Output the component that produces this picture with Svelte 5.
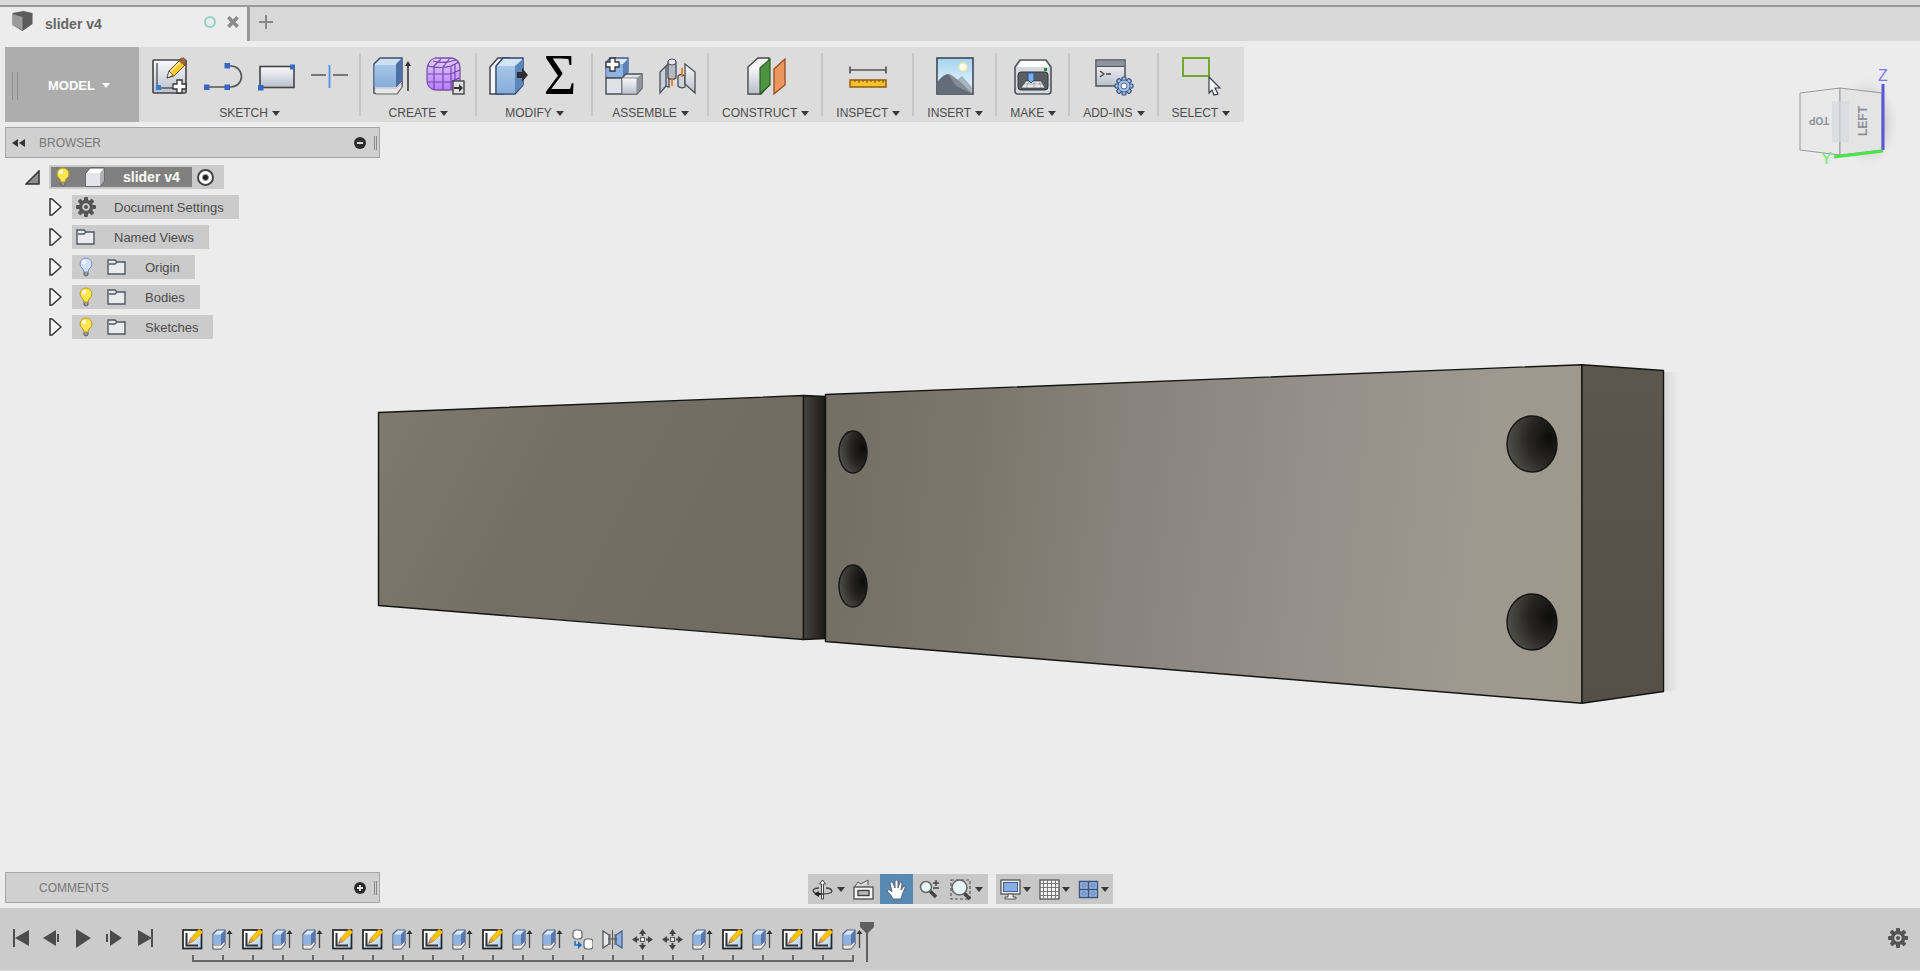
<script lang="ts">
    interface ToolGroup {
        label: string
        icons: string[]
    }

    interface TreeNode {
        label: string
        icons: string[]
    }

    interface NavItem {
        icon: string
        label: string
        menu?: boolean
    }

    const groups: ToolGroup[] = [
        { label: 'SKETCH', icons: ['sketch', 'line', 'rectangle', 'trim'] },
        { label: 'CREATE', icons: ['extrude', 'form'] },
        { label: 'MODIFY', icons: ['presspull', 'sigma'] },
        { label: 'ASSEMBLE', icons: ['component', 'joint'] },
        { label: 'CONSTRUCT', icons: ['plane'] },
        { label: 'INSPECT', icons: ['measure'] },
        { label: 'INSERT', icons: ['picture'] },
        { label: 'MAKE', icons: ['printer'] },
        { label: 'ADD-INS', icons: ['script'] },
        { label: 'SELECT', icons: ['select'] }
    ]

    const nodes: TreeNode[] = [
        { label: 'Document Settings', icons: ['gear'] },
        { label: 'Named Views', icons: ['folder'] },
        { label: 'Origin', icons: ['bulb-off', 'folder'] },
        { label: 'Bodies', icons: ['bulb', 'folder'] },
        { label: 'Sketches', icons: ['bulb', 'folder'] }
    ]

    const cameraTools: NavItem[] = [
        { icon: 'orbit', label: 'Orbit', menu: true },
        { icon: 'lookat', label: 'Look At' },
        { icon: 'pan', label: 'Pan' },
        { icon: 'zoom', label: 'Zoom' },
        { icon: 'fit', label: 'Fit', menu: true }
    ]

    const displayTools: NavItem[] = [
        { icon: 'display', label: 'Display Settings', menu: true },
        { icon: 'grid', label: 'Grid and Snaps', menu: true },
        { icon: 'viewports', label: 'Viewports', menu: true }
    ]

    const playback = [
        { label: 'Go to start', d: 'M2 1h2v18h-2zM18 2v16L4 10z' },
        { label: 'Step back', d: 'M14 2v16L1 10zM15 6h2v8h-2z' },
        { label: 'Play', d: 'M3 1L18 10L3 20z' },
        { label: 'Step forward', d: 'M2 6h2v8h-2zM6 2v16L18 10z' },
        { label: 'Go to end', d: 'M3 2v16L17 10zM16 1h2v18h-2z' }
    ]

    // s sketch, e extrude, c copy, m mirror, v move
    const history = [...'seseesseseseecmvvesesse']
    const featureNames: Record<string, string> = {
        s: 'Sketch',
        e: 'Extrude',
        c: 'Copy',
        m: 'Mirror',
        v: 'Move'
    }

    const teeth = [0, 45, 90, 135, 180, 225, 270, 315]
    const holes = [
        { cx: 853, cy: 452, rx: 14, ry: 21 },
        { cx: 853, cy: 586, rx: 14, ry: 21 },
        { cx: 1532, cy: 444, rx: 25, ry: 28 },
        { cx: 1532, cy: 622, rx: 25, ry: 28 }
    ]

    let activeTool = $state('pan')
</script>

{#snippet toolIcon(name: string)}
    <svg class="tool-icon" viewBox="0 0 38 38" aria-hidden="true">
        {#if name === 'sketch'}
            <rect x="2" y="3" width="33" height="33" rx="1" fill="url(#steel)" stroke="#444" stroke-width="1.6" />
            <path d="M6 6v25h20" fill="none" stroke="#555" stroke-width="1.4" />
            <rect x="5" y="28" width="5" height="5" fill="#2f7fd6" />
            <path d="M16 21l2-7L30 2l5 5-12 12z" fill="#ffc927" stroke="#6b4d14" stroke-width="1" />
            <path d="M19 15L30 4" stroke="#fff2a8" stroke-width="1.6" />
            <path d="M28 4l2-3h3l2 3v2l-2 2z" fill="#a5673f" stroke="#5d4632" stroke-width=".6" />
            <path d="M16 21l2-7 4 4z" fill="#fff" stroke="#444" stroke-width=".8" />
            <path d="M26 23h5v4h4v5h-4v4h-5v-4h-4v-5h4z" fill="#fff" stroke="#333" stroke-width="1.3" />
        {:else if name === 'line'}
            <path d="M3 30H27A10.500 10.500 0 0 0 27 9H23" fill="none" stroke="#555" stroke-width="1.6" />
            <path d="M0 27.500h5.500v5.500H0zM20.500 27.500H26V33h-5.500zM20.500 6H26v5.500h-5.500z" fill="#3767c6" />
        {:else if name === 'rectangle'}
            <rect x="3" y="9.500" width="34" height="21" fill="url(#steel)" stroke="#444" stroke-width="1.6" />
            <path d="M33 7.500h5v5h-5zM1 28h5.500v5.500H1z" fill="#3767c6" />
        {:else if name === 'trim'}
            <path d="M1 18h15M23 18h15" stroke="#555" stroke-width="1.6" />
            <path d="M19.500 8v23" stroke="#4d90f0" stroke-width="1.8" />
        {:else if name === 'extrude'}
            <path d="M1 7L7 1H29V29L23 36H1z" fill="#cddff0" stroke="#3b4f78" stroke-width="1.5" />
            <path d="M23 7L29 1V25L23 31z" fill="#4c70a6" />
            <path d="M1.500 8H23V30H1.500z" fill="url(#blue)" />
            <path d="M1.500 31H23L29 25V30L24 37H3L1 35z" fill="#e6e7ec" stroke="#666" stroke-width="1.2" />
            <path d="M2 31h21l6-6" stroke="#fff" fill="none" />
            <path d="M35 34V8" stroke="#444" stroke-width="1.7" />
            <path d="M32 9L35 4L38 9z" fill="#333" />
        {:else if name === 'form'}
            <path d="M9 1H26Q34 3 34 11V24Q31 33 24 33H10Q1 32 1 23V12Q2 3 9 1z" fill="url(#purple)" stroke="#7a52a8" stroke-width="1.300" />
            <path d="M2 9Q14 12 25 9L33 5M7 4Q18 7 30 3M2 17H25L34 13M2 25H25L33 21M8 9V32M17 10V33M25 9V32M8 9L15 2M17 10L24 1M29 7V29" fill="none" stroke="#7545b0" stroke-width="1.200" />
            <rect x="27" y="24" width="11" height="13" fill="#e2e2e2" stroke="#444" stroke-width="1.4" />
            <path d="M28 30h5v-3l4 4-4 4v-3h-5z" fill="#333" />
        {:else if name === 'presspull'}
            <path d="M1 10L9 1H20L14 9V37H1z" fill="#f5f5f7" stroke="#444" stroke-width="1.5" />
            <path d="M7 9L14 1H34V28L26 37H7z" fill="#d3e4f4" stroke="#2e4672" stroke-width="1.5" />
            <path d="M26 9L34 2V28L26 36z" fill="#5d86bd" />
            <path d="M8 9H26V36H8z" fill="url(#blue)" />
            <path d="M28 15h5v-4l6 7-6 7v-4h-5z" fill="#2e2e30" />
        {:else if name === 'sigma'}
            <text x="18" y="37" text-anchor="middle" class="sigma">Σ</text>
        {:else if name === 'component'}
            <path d="M1 6L5 1H23V15L18 20H1z" fill="#d7e5f7" stroke="#41598c" stroke-width="1.3" />
            <path d="M1.500 7H18V20H1.500z" fill="#8fb1df" />
            <path d="M18 7L23 2V15L18 20z" fill="#5b7fb8" />
            <path d="M1 21H17V37H1zM17 21L21 17H37V31L32 37H17z" fill="#dfe2e9" stroke="#4a4d55" stroke-width="1.4" />
            <path d="M17 21H32V37H17z" fill="url(#steel)" stroke="#777" stroke-width=".8" />
            <path d="M32 21L37 17V31L32 37z" fill="#8e939e" />
            <path d="M5 1h5v4h4v5h-4v4H5v-4H1V5h4z" fill="#fff" stroke="#333" stroke-width="1.300" />
        {:else if name === 'joint'}
            <path d="M2 15L8 9V29L2 36zM8 9L11 6V30L8 29z" fill="#c9cfd9" stroke="#4b4e55" stroke-width="1.300" />
            <path d="M10 5Q13 1 18 5V21Q14 24 10 21z" fill="#b4bac5" stroke="#4b4e55" stroke-width="1.300" />
            <ellipse cx="14" cy="5" rx="4" ry="3" fill="#e6e8ec" stroke="#4b4e55" />
            <path d="M20 19Q23 16 27 19V30Q23 32 20 29z" fill="#cdd2db" stroke="#4b4e55" stroke-width="1.300" />
            <path d="M27 7L37 15V36L27 27z" fill="url(#steel)" stroke="#4b4e55" stroke-width="1.300" />
            <path d="M14 21v8M24 11v9" stroke="#f27a1a" stroke-width="1.8" />
        {:else if name === 'plane'}
            <path d="M1 10L11 1H22V28L14 37H1z" fill="#f4f4f5" stroke="#444" stroke-width="1.4" />
            <path d="M2 10H13V36H2z" fill="url(#steel)" />
            <path d="M13 11L23 2V28L13 37z" fill="#4d9440" stroke="#2c5e22" stroke-width="1.200" />
            <path d="M27 12L38 2V28L27 37z" fill="#ea965f" stroke="#9c4d1f" stroke-width="1.300" />
        {:else if name === 'measure'}
            <path d="M1 13H37M1 9.500V16.500M37 9.500V16.500" stroke="#555" stroke-width="1.7" />
            <rect x="1" y="23" width="36" height="7" fill="#f2c12e" stroke="#9a6210" stroke-width="1.6" />
            <path d="M6 23v2M10 23v3M14 23v2M18 23v3M22 23v2M26 23v3M30 23v2M34 23v3" stroke="#805312" />
        {:else if name === 'picture'}
            <rect x="1" y="1" width="36" height="36" fill="url(#sky)" stroke="#3e4a58" stroke-width="1.6" />
            <circle cx="27" cy="10" r="4" fill="#fff" stroke="#f4e6a0" stroke-width="1.4" />
            <path d="M17 26L26 19L36 30V36H17z" fill="#a7b5c2" />
            <path d="M2 24Q8 17 12 17Q18 18 35 36H2z" fill="#646c7a" />
            <path d="M12 17Q18 18 35 36L20 29z" fill="#858c98" />
        {:else if name === 'printer'}
            <path d="M1 10L6 3H32L37 10V34Q37 37 34 37H4Q1 37 1 34z" fill="#d7d9de" stroke="#51545b" stroke-width="1.6" />
            <path d="M3 10L7 4H31L35 10z" fill="#fff" />
            <rect x="4" y="15" width="30" height="18" rx="3" fill="#5a5d63" stroke="#38393d" />
            <path d="M12 24H27L31 31H7z" fill="#e9eaec" stroke="#333" stroke-width=".6" />
            <path d="M15 24L12 31M20 24V31M25 24L27 31M9 27H29" stroke="#888" stroke-width=".6" />
            <path d="M14 16H20V23L17 26L14 23z" fill="#78aeea" stroke="#24528e" />
            <rect x="30" y="11" width="3" height="3" fill="#12912d" />
        {:else if name === 'script'}
            <rect x="1" y="3" width="29" height="26" fill="url(#steel)" stroke="#4d5058" stroke-width="1.5" />
            <path d="M2 4H29V9H2z" fill="#8d949f" />
            <path d="M2 9.500H29" stroke="#4d5058" />
            <path d="M5 14l4 3-4 3M11 17h5" fill="none" stroke="#444" stroke-width="1.300" />
            {#each teeth as angle}
                <rect x="27" y="20" width="4" height="5" rx="1" fill="#a9c3e8" stroke="#304d7c" stroke-width="1.2" transform="rotate({angle} 29 29)" />
            {/each}
            <circle cx="29" cy="29" r="6" fill="#a9c3e8" stroke="#304d7c" stroke-width=".8" />
            <circle cx="29" cy="29" r="3" fill="#fff" stroke="#46659a" />
        {:else if name === 'select'}
            <rect x="1" y="1" width="26" height="18" fill="none" stroke="#70a832" stroke-width="2" />
            <path d="M27 20L38 31L33 31L36 37L32 38L30 33L27 36z" fill="#f4f5f8" stroke="#3c3e44" stroke-width="1.200" />
        {/if}
    </svg>
{/snippet}

{#snippet treeIcon(name: string)}
    <svg class="tree-icon" viewBox="0 0 20 20" aria-hidden="true">
        {#if name === 'gear'}
            {#each teeth as angle}
                <rect x="8" y="0" width="4" height="6" rx="1" fill="#555" transform="rotate({angle} 10 10)" />
            {/each}
            <circle cx="10" cy="10" r="5.500" fill="none" stroke="#555" stroke-width="3.400" />
            <circle cx="10" cy="10" r="2" fill="#555" />
        {:else if name === 'folder'}
            <path d="M1 3h7l2 2h8v12H1z" fill="#e9ebef" stroke="#525863" stroke-width="1.4" />
            <path d="M2 7h6l2-2" fill="none" stroke="#525863" stroke-width="1.3" />
        {:else if name === 'cube'}
            <path d="M1 6l4-5h14v13l-4 5H1z" fill="#fff" stroke="#555" stroke-width="1" />
            <path d="M1 6h14v13H1z" fill="#e3e5ea" />
            <path d="M15 6l4-5v13l-4 5z" fill="#aeb2ba" />
        {:else}
            <path d="M8 14h4v4q-2 2-4 0z" fill="#9a9a9a" stroke="#5f6470" stroke-width="1" />
            <path d="M10 1a6 6 0 0 0-6 6q0 3 3 5l1 3h4l1-3q3-2 3-5a6 6 0 0 0-6-6z" fill={name === 'bulb' ? '#ffe550' : '#d4e0fa'} stroke={name === 'bulb' ? '#c29a1c' : '#7c93c7'} />
            <circle cx="8" cy="5" r="2.200" fill="#fff" opacity=".75" />
        {/if}
    </svg>
{/snippet}

{#snippet navIcon(name: string)}
    <svg class="nav-icon" viewBox="0 0 21 21" aria-hidden="true">
        {#if name === 'orbit'}
            <path d="M9.500 20V5H7.500L10.500 1L13.500 5H11.500V20z" fill="#fff" stroke="#444" />
            <path d="M7 9Q1 9 1 12Q2 15 10 15Q20 15 20 12Q19 9 14 9" fill="none" stroke="#444" stroke-width="1.300" />
            <path d="M2 15l5-3v6z" fill="#222" />
            <path d="M6 15h3" stroke="#222" stroke-width="2" />
        {:else if name === 'lookat'}
            <path d="M2 7L5 3L8 5L15 1V6" fill="#ddd" stroke="#555" />
            <rect x="1" y="8" width="19" height="12" fill="#f4f4f4" stroke="#555" stroke-width="1.4" />
            <rect x="5" y="11.500" width="11" height="5" fill="#bbb" stroke="#444" stroke-width="1.4" />
        {:else if name === 'pan'}
            <path d="M7 20Q5 15 1 12Q1 10 4 11L6 13L4 4Q5 2 7 4L9 9V2Q10 0 12 2V9L14 3Q16 2 16 5L15 11L18 7Q20 7 19 9Q16 15 15 20z" fill="#fff" stroke="#53606e" stroke-width=".9" />
        {:else if name === 'zoom'}
            <path d="M11 12l6 6" stroke="#444" stroke-width="3.400" />
            <circle cx="7" cy="8" r="5.500" fill="#e8f3f4" stroke="#666" stroke-width="1.500" />
            <path d="M14 4h6M17 1v6M14 9h6" stroke="#444" stroke-width="1.400" />
        {:else if name === 'fit'}
            <path d="M1 1h19v19H1z" fill="none" stroke="#555" stroke-width="1.200" stroke-dasharray="3 2" />
            <path d="M14 14l6 6" stroke="#444" stroke-width="3.600" />
            <circle cx="9.500" cy="8.500" r="7.500" fill="#e8f3f4" stroke="#666" stroke-width="1.500" />
        {:else if name === 'display'}
            <rect x="1" y="1" width="19" height="14" fill="#f0f0f0" stroke="#555" stroke-width="1.300" />
            <rect x="3.500" y="3.500" width="14" height="9" fill="#87aee0" stroke="#3c5f98" />
            <path d="M8 15h5v3h3v2H5v-2h3z" fill="#eee" stroke="#555" />
        {:else if name === 'grid'}
            <rect x="1" y="1" width="19" height="19" fill="#f5f5f5" stroke="#555" stroke-width="1.300" />
            <path d="M1 4.500h19M1 8.500h19M1 12.500h19M1 16.500h19M4.500 1v19M8.500 1v19M12.500 1v19M16.500 1v19" stroke="#777" />
        {:else if name === 'viewports'}
            <path d="M1.500 2.500h18v16h-18z" fill="#9dbbe3" stroke="#3e5580" stroke-width="1.400" />
            <path d="M10.500 2v17M1 10.500h19" stroke="#3e5580" stroke-width="1.600" />
            <path d="M4 5h4v3H4zM13 5h4v3h-4zM4 13h4v3H4zM13 13h4v3h-4z" fill="#8aabda" stroke="#6686ba" />
        {/if}
    </svg>
{/snippet}

{#snippet featureIcon(kind: string)}
    <svg class="feature-icon" viewBox="0 0 21 21" aria-hidden="true">
        {#if kind === 's'}
            <rect x="1" y="1" width="18.500" height="18.500" fill="url(#page)" stroke="#222" stroke-width="1.700" />
            <path d="M4.500 4v12.500H16" fill="none" stroke="#333" stroke-width="2" />
            <path d="M6 15l2-5 3 3z" fill="#7a6a4a" />
            <path d="M8 10L17 0L21 3L11 13z" fill="#ffc400" stroke="#c98212" stroke-width=".5" />
            <path d="M7 12L9 9L12 12L9 14z" fill="#e49a55" />
        {:else if kind === 'e'}
            <path d="M1 5L5 1H13V15L9 20H1z" fill="#dce8f6" stroke="#4c5f88" stroke-width="1.200" />
            <path d="M1.500 5.500H9V15H1.500z" fill="#8fb2df" />
            <path d="M9 5L13 1V13L9 16z" fill="#5478b2" />
            <path d="M1 16H9L13 12V15L9 20H2L1 19z" fill="#ecedf0" stroke="#777" />
            <path d="M17.500 19V4" stroke="#444" stroke-width="1.300" />
            <path d="M14.500 5l3-4 3 4z" fill="#333" />
        {:else if kind === 'c'}
            <rect x="1" y="1" width="9" height="9" rx="3" fill="#fff" stroke="#666" stroke-width="1.200" />
            <rect x="12" y="10" width="9" height="10" rx="3" fill="#fff" stroke="#666" stroke-width="1.200" />
            <path d="M3 12v4h5" fill="none" stroke="#1d6fc9" stroke-width="1.600" />
            <path d="M6 12l4 4-4 4z" fill="#1d6fc9" />
        {:else if kind === 'm'}
            <path d="M1 2L7 6V15L1 19z" fill="#e8e9ec" stroke="#555" stroke-width="1.300" />
            <path d="M20 2L14 6V15L20 19z" fill="#8db2e2" stroke="#43618f" stroke-width="1.300" />
            <path d="M10.500 1v19M8 5v11M13 5v11M6 10h9" stroke="#555" />
        {:else}
            <path d="M10.500 0L14 5H11.500V7H9.500V5H7zM10.500 21L14 16H11.500V14H9.500V16H7zM0 10.500L5 7V9.500H7V11.500H5V14zM21 10.500L16 7V9.500H14V11.500H16V14z" fill="#444" />
            <rect x="8.500" y="8.500" width="4" height="4" fill="#eee" stroke="#555" />
        {/if}
    </svg>
{/snippet}

{#snippet navGroup(items: NavItem[], wide: boolean)}
    <div class="nav-group" class:wide>
        {#each items as item}
            <button
                class="nav-btn"
                class:menu={item.menu}
                class:active={activeTool === item.icon}
                aria-label={item.label}
                onclick={() => !item.menu && (activeTool = item.icon)}>
                {@render navIcon(item.icon)}
                {#if item.menu}<span class="caret"></span>{/if}
            </button>
        {/each}
    </div>
{/snippet}

<!-- shared gradients -->
<svg class="defs" width="0" height="0" aria-hidden="true">
    <defs>
        <linearGradient id="steel" x1="0" y1="0" x2="0" y2="1">
            <stop offset="0" stop-color="#fafafc" />
            <stop offset="1" stop-color="#b9bfcc" />
        </linearGradient>
        <linearGradient id="blue" x1="0" y1="0" x2="0" y2="1">
            <stop offset="0" stop-color="#a7c6e9" />
            <stop offset="1" stop-color="#86add9" />
        </linearGradient>
        <linearGradient id="purple" x1="0" y1="0" x2="0" y2="1">
            <stop offset="0" stop-color="#e2cef6" />
            <stop offset="1" stop-color="#b87bff" />
        </linearGradient>
        <linearGradient id="sky" x1="0" y1="0" x2="0" y2="1">
            <stop offset="0" stop-color="#a5d3f0" />
            <stop offset="1" stop-color="#f2f9fd" />
        </linearGradient>
        <linearGradient id="page" x1="0" y1="0" x2="1" y2="1">
            <stop offset=".3" stop-color="#fff" />
            <stop offset="1" stop-color="#9cc4e6" />
        </linearGradient>
    </defs>
</svg>

<div class="app">
    <header class="tabs">
        <div class="tab">
            <svg class="tab-cube" viewBox="0 0 20 20" aria-hidden="true">
                <path d="M0 2L11 0L20 2V13L10 20L0 14z" fill="#5c5c5c" />
                <path d="M0 3L10 6V19L0 14z" fill="#9b9b9b" />
            </svg>
            <span class="tab-title">slider v4</span>
            <span class="status"></span>
            <button class="close" aria-label="Close tab">
                <svg viewBox="0 0 12 12"><path d="M2 2l8 8M10 2l-8 8" stroke="#8a8a8a" stroke-width="3" /></svg>
            </button>
        </div>
        <button class="new-tab" aria-label="New tab">
            <svg viewBox="0 0 14 14"><path d="M7 0v14M0 7h14" stroke="#85858b" stroke-width="2" /></svg>
        </button>
    </header>

    <main class="workspace">
        <svg class="model" viewBox="0 41 1920 867" aria-label="slider v4 model">
            <defs>
                <linearGradient id="face-left" x1="0" y1="0" x2="1" y2=".3">
                    <stop offset="0" stop-color="#7e7a6d" />
                    <stop offset=".5" stop-color="#736f64" />
                    <stop offset="1" stop-color="#706c61" />
                </linearGradient>
                <linearGradient id="face-right" gradientUnits="userSpaceOnUse" x1="826" y1="480" x2="1582" y2="560">
                    <stop offset="0" stop-color="#736f64" />
                    <stop offset=".2" stop-color="#7b776c" />
                    <stop offset=".4" stop-color="#88847d" />
                    <stop offset=".65" stop-color="#95918a" />
                    <stop offset=".9" stop-color="#9e9a90" />
                    <stop offset="1" stop-color="#9e988a" />
                </linearGradient>
                <linearGradient id="groove" x1="0" y1="0" x2="1" y2="0">
                    <stop offset="0" stop-color="#45443f" />
                    <stop offset="1" stop-color="#1b1a18" />
                </linearGradient>
                <linearGradient id="end" x1="0" y1="0" x2="0" y2="1">
                    <stop offset="0" stop-color="#5b574e" />
                    <stop offset="1" stop-color="#545047" />
                </linearGradient>
                <linearGradient id="cast" x1="0" y1="0" x2="1" y2="0">
                    <stop offset="0" stop-color="#d6d6d6" />
                    <stop offset="1" stop-color="#ececec" />
                </linearGradient>
                <radialGradient id="bore" cx=".85" cy=".4" r=".9">
                    <stop offset="0" stop-color="#0c0c0b" />
                    <stop offset=".5" stop-color="#282724" />
                    <stop offset="1" stop-color="#55554f" />
                </radialGradient>
            </defs>
            <path d="M1664 372H1678V691H1664z" fill="url(#cast)" />
            <g stroke="#141412" stroke-width="1.400" stroke-linejoin="round">
                <path d="M378.500 412.500L803.500 395.500V639.500L378.500 605.500z" fill="url(#face-left)" />
                <path d="M803.500 395.500L825.500 396.500V638.500L803.500 639.500z" fill="url(#groove)" />
                <path d="M825.500 394.500L1582 364.700V703.300L825.500 641.500z" fill="url(#face-right)" />
                <path d="M1582 364.700L1663.500 370.500V691.500L1582 703.300z" fill="url(#end)" />
                {#each holes as hole}
                    <ellipse {...hole} fill="url(#bore)" />
                {/each}
            </g>
        </svg>

        <svg class="view-cube" viewBox="0 0 110 110" aria-label="View cube">
            <defs>
                <radialGradient id="cube-shadow">
                    <stop offset=".4" stop-color="#bdbdbd" />
                    <stop offset="1" stop-color="#ececec" stop-opacity="0" />
                </radialGradient>
            </defs>
            <ellipse cx="78" cy="55" rx="32" ry="48" fill="url(#cube-shadow)" />
            <path d="M10 26L50 21V88L10 83z" fill="#e9e9e9" stroke="#999" />
            <path d="M50 21L92 26V83L50 88z" fill="#e4e4e4" stroke="#999" />
            <path d="M42 34H59V75H42z" fill="#d5d8e0" opacity=".7" />
            <text class="cube-face top" transform="translate(29 54) rotate(180)" y="4" text-anchor="middle">TOP</text>
            <text class="cube-face" transform="translate(73 54) rotate(-90)" y="4" text-anchor="middle">LEFT</text>
            <path d="M93 17V83" stroke="#5c56d8" stroke-width="3" />
            <path d="M93 84L44 90" stroke="#45e645" stroke-width="3" />
            <text class="axis z" x="88" y="14">Z</text>
            <text class="axis y" x="31" y="97">Y</text>
        </svg>

        <div class="toolbar" role="toolbar" aria-label="Model tools">
            <button class="mode">
                <span class="grip"></span>
                MODEL
                <span class="caret"></span>
            </button>
            {#each groups as group}
                <div class="tool-group">
                    <div class="tool-icons">
                        {#each group.icons as icon}
                            <button class="tool" aria-label={icon}>{@render toolIcon(icon)}</button>
                        {/each}
                    </div>
                    <button class="tool-label">{group.label}<span class="caret"></span></button>
                </div>
            {/each}
        </div>

        <div class="panel-head browser">
            <svg class="collapse" viewBox="0 0 13 8" aria-hidden="true"><path d="M6 0v8L0 4zM13 0v8L7 4z" fill="#333" /></svg>
            <span class="panel-title">BROWSER</span>
            <button class="round" aria-label="Collapse browser">
                <svg viewBox="0 0 12 12"><circle cx="6" cy="6" r="6" fill="#2c2c2c" /><path d="M3 6h6" stroke="#ddd" stroke-width="2" /></svg>
            </button>
            <span class="edge"></span>
        </div>

        <ul class="tree">
            <li class="root">
                <svg class="opened" viewBox="0 0 15 15" aria-hidden="true"><path d="M1 14L14 1V14z" fill="#8f8f8f" stroke="#333" stroke-width="1.500" /></svg>
                <div class="root-pill">
                    <span class="root-name">
                        {@render treeIcon('bulb')}
                        {@render treeIcon('cube')}
                        slider v4
                    </span>
                    <input type="radio" checked aria-label="Activate slider v4" />
                </div>
            </li>
            {#each nodes as node}
                <li>
                    <svg class="closed" viewBox="0 0 13 18" aria-hidden="true"><path d="M1 1H3L12 9L3 17H1z" fill="#f5f5f5" stroke="#333" stroke-width="1.500" /></svg>
                    <div class="pill">
                        {#each node.icons as icon}{@render treeIcon(icon)}{/each}
                        <span>{node.label}</span>
                    </div>
                </li>
            {/each}
        </ul>

        <div class="bottom">
            <div class="panel-head comments">
                <span class="panel-title">COMMENTS</span>
                <button class="round" aria-label="Expand comments">
                    <svg viewBox="0 0 12 12"><circle cx="6" cy="6" r="6" fill="#2c2c2c" /><path d="M3 6h6M6 3v6" stroke="#ddd" stroke-width="2" /></svg>
                </button>
                <span class="edge"></span>
            </div>
            <nav class="navbar" aria-label="Navigation">
                {@render navGroup(cameraTools, true)}
                {@render navGroup(displayTools, false)}
            </nav>
        </div>
    </main>

    <footer class="timeline">
        <div class="playback">
            {#each playback as step}
                <button aria-label={step.label}>
                    <svg viewBox="0 0 20 20"><path d={step.d} fill="#4c4c4c" /></svg>
                </button>
            {/each}
        </div>
        <ol class="features">
            {#each history as kind}
                <li><button aria-label={featureNames[kind]}>{@render featureIcon(kind)}</button></li>
            {/each}
        </ol>
        <svg class="marker" viewBox="0 0 16 40" aria-hidden="true">
            <path d="M1 0H15V5L9 11V40H7V11L1 5z" fill="#606060" />
        </svg>
        <button class="settings" aria-label="Timeline settings">{@render treeIcon('gear')}</button>
    </footer>
</div>

<style>
    :global(body) {
        margin: 0;
    }

    .app {
        display: flex;
        flex-direction: column;
        min-height: 100vh;
        background: #ececec;
        color: #4c4c4c;
        font-family: 'Liberation Sans', Arial, sans-serif;
        font-size: 12px;
    }

    .defs {
        position: absolute;
    }

    button {
        display: flex;
        align-items: center;
        padding: 0;
        border: 0;
        background: none;
        color: inherit;
        font: inherit;
    }

    svg {
        display: block;
    }

    .caret {
        width: 0;
        border: 4px solid transparent;
        border-top: 5px solid #383838;
        border-bottom: 0;
    }

    /* document tabs */
    .tabs {
        display: flex;
        height: 36px;
        padding-top: 5px;
        background: linear-gradient(#d8d8d8 5px, #999 5px, #999 7px, #d8d8d8 7px);
    }

    .tab {
        display: flex;
        align-items: center;
        box-sizing: border-box;
        width: 250px;
        margin-top: 2px;
        padding: 0 7px 0 12px;
        border-right: 3px solid #999;
        background: #ececec;
    }

    .tab-cube {
        width: 21px;
        height: 20px;
        margin-bottom: 6px;
    }

    .tab-title {
        flex: 1;
        padding-left: 12px;
        color: #666;
        font-size: 14px;
        font-weight: bold;
    }

    .status {
        width: 8px;
        height: 8px;
        margin: 0 10px 4px;
        border: 2px solid #8ed2c0;
        border-radius: 50%;
    }

    .close {
        margin-bottom: 4px;
    }

    .close svg,
    .new-tab svg {
        width: 14px;
        height: 14px;
    }

    .new-tab {
        padding: 0 9px 2px;
    }

    /* canvas */
    .workspace {
        position: relative;
        display: flex;
        flex: 1;
        flex-direction: column;
        align-items: flex-start;
        padding: 6px 5px 4px;
    }

    .model {
        position: absolute;
        inset: 0;
        width: 100%;
        height: 100%;
    }

    .view-cube {
        position: absolute;
        top: 26px;
        right: 20px;
        width: 110px;
        height: 110px;
    }

    .cube-face {
        fill: #8d9196;
        font-size: 12px;
        font-weight: bold;

        &.top {
            font-size: 10px;
        }
    }

    .axis {
        font-size: 16px;

        &.z {
            fill: #7d78f0;
        }

        &.y {
            fill: #6fe86f;
        }
    }

    /* toolbar */
    .toolbar {
        position: relative;
        display: flex;
        height: 75px;
        background: #dcdcdc;
    }

    .mode {
        gap: 7px;
        width: 134px;
        padding: 2px 0 0 7px;
        background: #adadad;
        color: #fff;
        font-size: 13px;
        font-weight: bold;

        & .grip {
            width: 4px;
            height: 28px;
            margin-right: 23px;
            border: solid #919191;
            border-width: 0 1px;
        }

        & .caret {
            border-top-color: #fff;
        }
    }

    .tool-group {
        display: flex;
        flex-direction: column;
        align-items: center;
        gap: 10px;
        padding: 10px 13px 0 12px;
        background: linear-gradient(#c6c6c6, #c6c6c6) no-repeat right 6px / 2px 63px;

        &:last-child {
            background: none;
        }
    }

    .tool-icons {
        display: flex;
        gap: 15px;
    }

    .tool-icon {
        width: 38px;
        height: 38px;
        overflow: visible;
    }

    .sigma {
        fill: #000;
        font-family: 'Liberation Serif', serif;
        font-size: 56px;
    }

    .tool-label {
        gap: 4px;
        padding: 0 1px;
        line-height: 16px;
    }

    /* browser panel */
    .panel-head {
        position: relative;
        display: flex;
        align-items: center;
        box-sizing: border-box;
        width: 375px;
        height: 31px;
        padding: 0 2px 0 6px;
        border: 1px solid #a6a6a6;
        background: #d0d0d0;
        color: #777;
    }

    .browser {
        margin-top: 5px;
    }

    .comments {
        margin-bottom: 1px;
        padding-left: 33px;
    }

    .collapse {
        width: 13px;
        height: 8px;
        margin-right: 14px;
    }

    .panel-title {
        flex: 1;
    }

    .round svg {
        width: 12px;
        height: 12px;
    }

    .edge {
        width: 1px;
        height: 14px;
        margin-left: 8px;
        border: solid #8a8a8a;
        border-width: 0 1px;
    }

    .tree {
        position: relative;
        display: flex;
        flex-direction: column;
        gap: 6px;
        margin: 7px 0 0;
        padding: 0;
        font-size: 13px;
        list-style: none;

        & li {
            display: flex;
            align-items: center;
            gap: 10px;
            padding-left: 44px;
        }

        & .root {
            gap: 9px;
            padding-left: 20px;
        }
    }

    .opened {
        width: 15px;
        height: 15px;
    }

    .closed {
        width: 13px;
        height: 18px;
    }

    .tree-icon {
        width: 20px;
        height: 20px;
    }

    .root-pill,
    .pill {
        display: flex;
        align-items: center;
        height: 24px;
        background: #cbcbcb;
    }

    .root-pill {
        gap: 5px;
        padding: 0 10px 0 2px;

        & input {
            appearance: none;
            box-sizing: border-box;
            width: 17px;
            height: 17px;
            margin: 0;
            border: 2px solid #444;
            border-radius: 50%;
            background: radial-gradient(#222 2px, #fff 4px);
        }
    }

    .root-name {
        display: flex;
        align-items: center;
        gap: 12px;
        height: 20px;
        padding: 0 12px 0 2px;
        background: #808080;
        color: #fff;
        font-size: 14px;
        font-weight: bold;

        & .tree-icon:nth-child(2) {
            margin-right: 6px;
        }
    }

    .pill {
        gap: 11px;
        padding: 0 15px 0 4px;

        & span {
            margin-left: 7px;
        }
    }

    /* bottom bars */
    .bottom {
        position: relative;
        display: grid;
        grid-template-columns: 1fr auto 1fr;
        align-items: end;
        align-self: stretch;
        margin-top: auto;
    }

    .navbar {
        display: flex;
        gap: 8px;
    }

    .nav-group {
        display: flex;
        height: 30px;
        background: #c8c8c8;
    }

    .nav-btn {
        gap: 2px;
        padding: 0 6px;

        &.menu {
            padding: 0 4px;
        }

        &.active {
            background: #5789b3;
        }
    }

    .wide {
        padding-right: 3px;

        & .menu {
            gap: 4px;
            padding: 0 2px 0 4px;
        }
    }

    .nav-icon {
        width: 21px;
        height: 21px;
    }

    .timeline {
        display: flex;
        align-items: flex-start;
        box-sizing: border-box;
        height: 63px;
        padding: 14px 12px 0 11px;
        background: #cbcbcb;
        border-bottom: 1px solid #dcdcdc;
    }

    .playback {
        display: flex;
        gap: 11px;
        padding-top: 6px;

        & svg {
            width: 20px;
            height: 20px;
        }
    }

    .features {
        display: flex;
        margin: 0;
        padding: 7px 0 0 23px;
        list-style: none;

        & li {
            width: 30px;
        }

        & li::after {
            display: block;
            box-sizing: border-box;
            width: 30px;
            height: 7px;
            margin: 5px 0 0 14px;
            border: solid #666;
            border-width: 0 0 2px 2px;
            content: '';
        }

        & li:last-child::after {
            width: 2px;
        }

        & button {
            padding-left: 4px;
        }
    }

    .feature-icon {
        width: 21px;
        height: 21px;
    }

    .marker {
        width: 16px;
        height: 40px;
        margin-left: -9px;
    }

    .settings {
        margin: 6px 0 0 auto;
    }
</style>
